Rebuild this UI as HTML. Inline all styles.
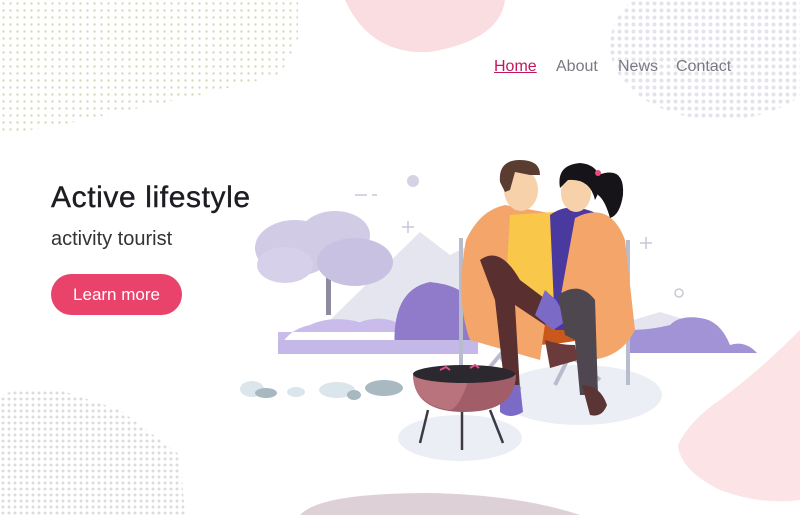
<!DOCTYPE html>
<html><head><meta charset="utf-8"><style>
html,body{margin:0;padding:0;width:800px;height:515px;overflow:hidden;background:#fff;font-family:"Liberation Sans",sans-serif;position:relative}
.abs{position:absolute}
nav a{position:absolute;top:58px;font-size:16px;color:#7a7880;text-decoration:none}
</style></head><body>
<svg class="abs" style="left:0;top:0" width="800" height="515" viewBox="0 0 800 515">
<defs>
<pattern id="dg" width="7" height="7" patternUnits="userSpaceOnUse"><circle cx="3.5" cy="3.5" r="1.2" fill="#d6d9b8"/></pattern>
<pattern id="dgr" width="6" height="6" patternUnits="userSpaceOnUse"><circle cx="3" cy="3" r="1.5" fill="#dcdce0"/></pattern>
<pattern id="dp" width="7" height="7" patternUnits="userSpaceOnUse"><circle cx="3.5" cy="3.5" r="2" fill="#e4e3ec"/></pattern>
</defs>
<path d="M0 0H298V40L280 75 200 95 130 110 60 125 0 135Z" fill="url(#dg)"/>
<path d="M0 395 Q30 385 60 390 L120 410 L180 455 L185 515 H0Z" fill="url(#dgr)"/>
<ellipse cx="720" cy="45" rx="110" ry="75" fill="url(#dp)"/>
<path d="M345 0H505Q500 40 430 52Q370 55 345 0Z" fill="#f9dde1"/>
<path d="M800 330V500Q760 505 720 490Q680 470 678 445Q690 420 720 400Q760 370 800 330Z" fill="#fbe3e6"/>
<path d="M300 515Q320 493 430 493Q520 495 580 515Z" fill="#ddd0d6"/>
<path d="M330 320L420 232L450 255L480 240L560 330Z" fill="#e5e5f0"/>
<path d="M600 330L660 312L720 330Z" fill="#e5e5f0"/>
<path d="M278 353Q285 330 310 325Q330 315 360 322Q390 312 410 332H278Z" fill="#c9bcea"/>
<path d="M395 353Q390 290 430 282Q460 285 470 300V353Z" fill="#8f7bc9"/>
<path d="M278 353H757Q745 340 730 345Q720 320 700 318Q680 315 670 325Q650 330 630 330V353Z" fill="#a293d6"/>
<rect x="278" y="340" width="200" height="14" fill="#c4b8e8"/>
<rect x="326" y="270" width="5" height="45" fill="#8e8aa0"/>
<ellipse cx="295" cy="248" rx="40" ry="28" fill="#d1cbe6"/>
<ellipse cx="335" cy="235" rx="35" ry="24" fill="#d1cbe6"/>
<ellipse cx="355" cy="262" rx="38" ry="24" fill="#c9c1e2"/>
<ellipse cx="285" cy="265" rx="28" ry="18" fill="#d6d0ea"/>
<circle cx="413" cy="181" r="6" fill="#d4d2e4"/>
<circle cx="679" cy="293" r="4" fill="none" stroke="#c8c8d4" stroke-width="1.5"/>
<path d="M355 195h12M372 195h5M402 227h12M408 221v12M640 243h12M646 237v12" stroke="#c8c8d8" stroke-width="1.5"/>
<ellipse cx="252" cy="389" rx="12" ry="8" fill="#dbe6ec"/><ellipse cx="266" cy="393" rx="11" ry="5" fill="#a8b8c0"/>
<ellipse cx="296" cy="392" rx="9" ry="5" fill="#dbe6ec"/><ellipse cx="337" cy="390" rx="18" ry="8" fill="#dbe6ec"/>
<ellipse cx="354" cy="395" rx="7" ry="5" fill="#a8b8c0"/><ellipse cx="384" cy="388" rx="19" ry="8" fill="#a9b9c2"/>
<ellipse cx="580" cy="395" rx="82" ry="30" fill="#eceef6"/>
<ellipse cx="460" cy="438" rx="62" ry="23" fill="#eceef6"/>
<path d="M461 238V390M628 240V385M475 385L500 355 520 390M600 380L570 355 555 385" stroke="#b8bccc" stroke-width="4" fill="none"/>
<path d="M470 330Q520 360 620 330L615 320H475Z" fill="#c9581c"/>
<path d="M466 240Q480 210 505 205L560 215L540 360L470 340Q455 300 466 240Z" fill="#f4a56a"/>
<path d="M510 215L555 212L555 305L505 300Z" fill="#f9c84a"/>
<path d="M550 215Q570 200 600 215L610 330H555Z" fill="#4a3aa0"/>
<path d="M575 218Q610 200 625 240L635 330Q620 360 585 360L560 300Z" fill="#f4a56a"/>
<path d="M480 260Q500 245 520 280L560 310L545 325L515 305L520 390H505L495 300Z" fill="#5a2f30"/>
<path d="M545 290L556 300 568 320 553 330 535 315Z" fill="#7b6ac6"/>
<path d="M558 295Q580 280 595 300L598 395H580L575 340 565 335Z" fill="#4e4750"/>
<path d="M545 340Q560 345 575 345L578 360 550 368Z" fill="#6b3a3a"/>
<path d="M582 385Q600 385 607 405 602 418 590 415 580 400Z" fill="#5b3535"/>
<path d="M500 385H520L523 412Q510 420 500 412Z" fill="#7b6ac6"/>
<ellipse cx="521" cy="190" rx="17" ry="21" fill="#f6d1aa"/>
<path d="M500 182Q498 160 520 160Q540 160 540 175L530 175 515 172 510 190 505 192Z" fill="#5a3d30"/>
<ellipse cx="576" cy="193" rx="15" ry="19" fill="#f6d1aa"/>
<path d="M560 188Q556 165 580 163Q603 165 600 190L595 200Q590 178 568 180Z" fill="#161418"/>
<path d="M598 175Q625 165 623 195Q620 215 610 218Q605 200 598 195Z" fill="#161418"/>
<circle cx="598" cy="173" r="3" fill="#e84a7a"/>
<path d="M428 410L420 443M462 410V450M490 410L503 443" stroke="#3c3a44" stroke-width="2.5"/>
<path d="M413 375H516Q515 412 464 412Q414 412 413 375Z" fill="#a25e68"/>
<path d="M413 375H470Q460 408 450 410Q414 405 413 375Z" fill="#b9737c"/>
<ellipse cx="464" cy="374" rx="51" ry="9" fill="#2c2830"/>
<path d="M440 370l6-3 4 3M470 368l5-3 4 3" stroke="#e0508a" stroke-width="2" fill="none"/>
</svg>
<nav>
<a style="left:494px;color:#c2185b;text-decoration:underline">Home</a>
<a style="left:556px">About</a>
<a style="left:618px">News</a>
<a style="left:676px">Contact</a>
</nav>
<div class="abs" style="left:51px;top:181px;font-size:30px;color:#1c1c22;letter-spacing:0.6px;-webkit-text-stroke:0.4px #1c1c22">Active lifestyle</div>
<div class="abs" style="left:51px;top:228px;font-size:20px;color:#333">activity tourist</div>
<div class="abs" style="left:51px;top:274px;width:131px;height:41px;border-radius:21px;background:#e9426b;color:#fff;font-size:17px;line-height:41px;text-align:center">Learn more</div>
</body></html>
